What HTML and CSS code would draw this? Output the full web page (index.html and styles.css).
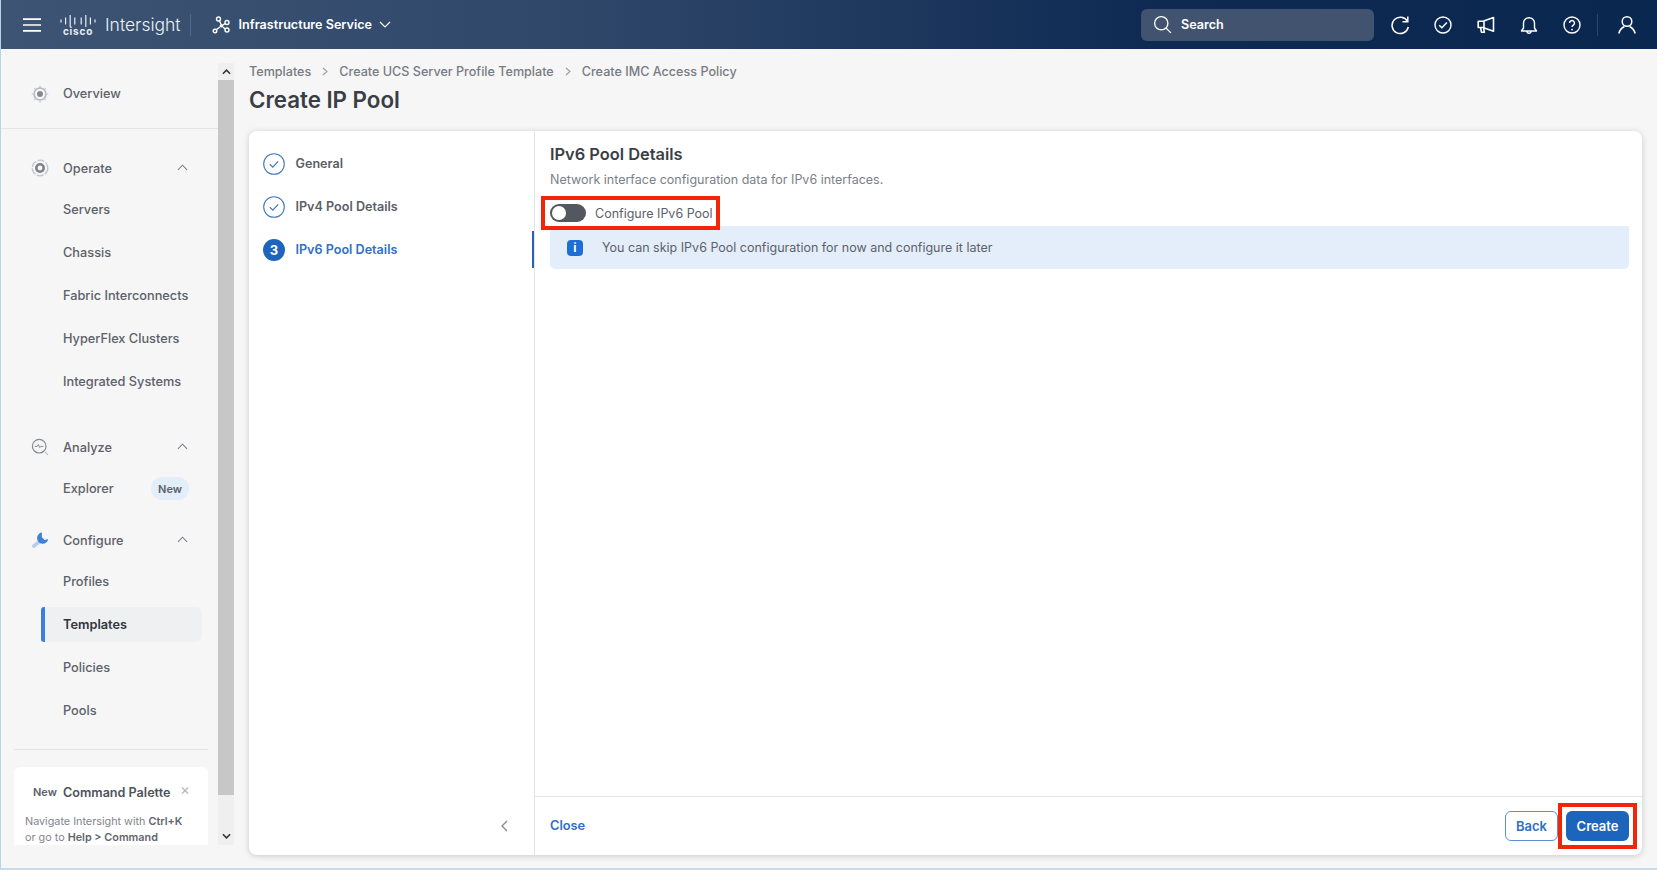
FILE: index.html
```html
<!DOCTYPE html>
<html lang="en">
<head>
<meta charset="utf-8">
<title>Create IP Pool</title>
<link rel="stylesheet" href="styles.css">
</head>
<body>
<div class="page">
  <header class="topbar">
    <svg class="burger" viewBox="0 0 18 14" width="18" height="14"><path d="M0 1.2h18M0 7h18M0 12.8h18" stroke="#fff" stroke-width="1.7" fill="none"/></svg>
    <div class="logo">
      <svg class="logo-bars" viewBox="0 0 36 13" width="36" height="13"><path d="M1 5.5v3M5.6 3.5v7M10.2 1v12M14.8 3.5v7M21.2 3.5v7M25.8 1v12M30.4 3.5v7M35 5.5v3" stroke="#e8edf4" stroke-width="1.2" fill="none"/></svg>
      <span class="logo-word">cisco</span>
    </div>
    <span class="product">Intersight</span>
    <span class="vrule"></span>
    <svg class="service-ico" viewBox="0 0 18 18" width="18" height="18"><g fill="none" stroke="#fff" stroke-width="1.4"><circle cx="6.5" cy="3" r="2"/><circle cx="15" cy="6.5" r="2"/><circle cx="15" cy="14" r="2"/><circle cx="3" cy="15" r="1.8"/><path d="M7.5 5l1.5 3M4.5 13.5L8 11M13 7.5l-2 1.5M13 13l-2-2"/></g><circle cx="9.5" cy="9.8" r="1.8" fill="#fff"/></svg>
    <span class="service">Infrastructure Service</span>
    <svg class="service-chev" viewBox="0 0 12 7" width="12" height="7"><path d="M1 1l5 5 5-5" stroke="#fff" stroke-width="1.2" fill="none"/></svg>
    <div class="search">
      <svg viewBox="0 0 20 20" width="19" height="19"><circle cx="8.7" cy="8.7" r="7" fill="none" stroke="#fff" stroke-width="1.4"/><path d="M13.8 13.8l5 5" stroke="#fff" stroke-width="1.4"/></svg>
      <span>Search</span>
    </div>
    <div class="tools">
      <svg viewBox="0 0 20 20" width="20" height="20"><path d="M17.5 6.5A8.2 8.2 0 1 0 18.3 12" fill="none" stroke="#fff" stroke-width="1.5"/><path d="M17.8 1.5v5.3h-5.3" fill="none" stroke="#fff" stroke-width="1.5"/></svg>
      <svg viewBox="0 0 20 20" width="20" height="20"><circle cx="10" cy="10" r="8" fill="none" stroke="#fff" stroke-width="1.4"/><path d="M6.2 10.2l2.7 2.6 5-5.3" fill="none" stroke="#fff" stroke-width="1.4"/></svg>
      <svg viewBox="0 0 20 20" width="20" height="20"><path d="M17.5 2.5L7 6.3H2.2v6.2H7l10.5 3.8zM8 6v6.6M4.6 12.5l.8 4.7h3l-.8-4.2" fill="none" stroke="#fff" stroke-width="1.6" stroke-linejoin="round"/></svg>
      <svg viewBox="0 0 20 20" width="20" height="20"><path d="M2.5 16h15l-2-3V8.2a5.5 5.5 0 0 0-11 0V13zM8 16.2a2 2 0 0 0 4 0" fill="none" stroke="#fff" stroke-width="1.4" stroke-linejoin="round"/></svg>
      <svg viewBox="0 0 20 20" width="20" height="20"><circle cx="10" cy="10" r="8" fill="none" stroke="#fff" stroke-width="1.4"/><path d="M7.5 8a2.5 2.5 0 1 1 3.8 2.1c-.9.6-1.3 1-1.3 2" fill="none" stroke="#fff" stroke-width="1.4"/><circle cx="10" cy="14.6" r=".9" fill="#fff"/></svg>
      <span class="tool-rule"></span>
      <svg viewBox="0 0 20 20" width="20" height="20"><circle cx="10" cy="6.5" r="4.8" fill="none" stroke="#fff" stroke-width="1.5"/><path d="M1.8 18.5c1-4 4-6.2 5.6-7M18.2 18.5c-1-4-4-6.2-5.6-7" fill="none" stroke="#fff" stroke-width="1.5"/></svg>
    </div>
  </header>

  <div class="workspace">
    <aside class="sidebar">
      <div class="overview-block">
        <div class="nav-head">
          <svg class="nav-ico" viewBox="0 0 18 18" width="18" height="18"><circle cx="9" cy="9" r="6" fill="none" stroke="#b4b8bd" stroke-width="1.6"/><circle cx="9" cy="9" r="3" fill="#85898f"/><path d="M9 .6v2.4M9 15v2.4M.6 9H3M15 9h2.4M3.2 3.2l1.6 1.6M13.2 13.2l1.6 1.6M14.8 3.2l-1.6 1.6M4.8 13.2l-1.6 1.6" stroke="#c2c5c9" stroke-width="1.2"/></svg>
          <span>Overview</span>
        </div>
      </div>
      <div class="nav-group first-group">
        <div class="nav-head">
          <svg class="nav-ico" viewBox="0 0 18 18" width="18" height="18"><circle cx="9" cy="9" r="7.8" fill="none" stroke="#c2c5c9" stroke-width="1.3" stroke-dasharray="7 1.5"/><circle cx="9" cy="9" r="3.7" fill="none" stroke="#7f8389" stroke-width="2.6"/></svg>
          <span>Operate</span>
          <svg class="chev" viewBox="0 0 12 7" width="11" height="7"><path d="M1 6l5-5 5 5" stroke="#777b82" stroke-width="1.1" fill="none"/></svg>
        </div>
        <a class="nav-sub">Servers</a>
        <a class="nav-sub">Chassis</a>
        <a class="nav-sub">Fabric Interconnects</a>
        <a class="nav-sub">HyperFlex Clusters</a>
        <a class="nav-sub">Integrated Systems</a>
      </div>
      <div class="nav-group analyze-group">
        <div class="nav-head">
          <svg class="nav-ico" viewBox="0 0 18 18" width="18" height="18"><circle cx="8.2" cy="8.2" r="6.8" fill="none" stroke="#85898f" stroke-width="1.2"/><path d="M3.8 8.4h2.4l1.2-1.8 1.4 3 1-1.2h2.5" fill="none" stroke="#85898f" stroke-width="1"/><path d="M14 14l3 3" stroke="#c2c5c9" stroke-width="1.3"/></svg>
          <span>Analyze</span>
          <svg class="chev" viewBox="0 0 12 7" width="11" height="7"><path d="M1 6l5-5 5 5" stroke="#777b82" stroke-width="1.1" fill="none"/></svg>
        </div>
        <a class="nav-sub">Explorer<span class="badge">New</span></a>
      </div>
      <div class="nav-group configure-group">
        <div class="nav-head">
          <svg class="nav-ico" viewBox="0 0 18 18" width="18" height="18"><path d="M2.8 15.2L8 11" stroke="#b5cdf0" stroke-width="3.6" stroke-linecap="round" fill="none"/><path d="M11 1.6A5.6 5.6 0 1 0 17.2 8L13.6 9l-2.8-3z" fill="#3f7fdc"/></svg>
          <span>Configure</span>
          <svg class="chev" viewBox="0 0 12 7" width="11" height="7"><path d="M1 6l5-5 5 5" stroke="#777b82" stroke-width="1.1" fill="none"/></svg>
        </div>
        <a class="nav-sub">Profiles</a>
        <a class="nav-sub is-current">Templates</a>
        <a class="nav-sub">Policies</a>
        <a class="nav-sub">Pools</a>
      </div>
      <div class="side-rule"></div>
      <div class="palette">
        <div class="palette-head">
          <span class="palette-new">New</span>
          <span class="palette-title">Command Palette</span>
          <span class="palette-x">×</span>
        </div>
        <p class="palette-text">Navigate Intersight with <b>Ctrl+K</b><br>or go to <b>Help &gt; Command</b></p>
      </div>
    </aside>

    <div class="scrollbar">
      <div class="scroll-btn"><svg viewBox="0 0 10 6" width="9" height="6"><path d="M1 5l4-4 4 4" stroke="#333" stroke-width="1.7" fill="none"/></svg></div>
      <div class="scroll-thumb"></div>
      <div class="scroll-btn end"><svg viewBox="0 0 10 6" width="9" height="6"><path d="M1 1l4 4 4-4" stroke="#333" stroke-width="1.7" fill="none"/></svg></div>
    </div>

    <main class="main">
      <nav class="crumbs">
        <span>Templates</span>
        <svg class="crumb-sep" viewBox="0 0 6 9" width="6" height="9"><path d="M1 1l4 3.5L1 8" stroke="#9a9ea4" stroke-width="1.1" fill="none"/></svg>
        <span>Create UCS Server Profile Template</span>
        <svg class="crumb-sep" viewBox="0 0 6 9" width="6" height="9"><path d="M1 1l4 3.5L1 8" stroke="#9a9ea4" stroke-width="1.1" fill="none"/></svg>
        <span>Create IMC Access Policy</span>
      </nav>
      <h1 class="page-title">Create IP Pool</h1>
      <section class="wizard">
        <div class="steps">
          <div class="step-list">
            <div class="step">
              <svg viewBox="0 0 22 22" width="22" height="22"><circle cx="11" cy="11" r="10.3" fill="none" stroke="#3f76c4" stroke-width="1.1"/><path d="M6.8 11.3l3 2.9 5.4-5.8" fill="none" stroke="#3f76c4" stroke-width="1.2"/></svg>
              <span>General</span>
            </div>
            <div class="step">
              <svg viewBox="0 0 22 22" width="22" height="22"><circle cx="11" cy="11" r="10.3" fill="none" stroke="#3f76c4" stroke-width="1.1"/><path d="M6.8 11.3l3 2.9 5.4-5.8" fill="none" stroke="#3f76c4" stroke-width="1.2"/></svg>
              <span>IPv4 Pool Details</span>
            </div>
            <div class="step active">
              <span class="step-num">3</span>
              <span>IPv6 Pool Details</span>
            </div>
          </div>
          <div class="collapse"><svg viewBox="0 0 8 12" width="8" height="12"><path d="M7 1L2 6l5 5" stroke="#85898f" stroke-width="1.3" fill="none"/></svg></div>
        </div>
        <div class="pane">
          <div class="pane-body">
            <h2 class="pane-title">IPv6 Pool Details</h2>
            <p class="pane-sub">Network interface configuration data for IPv6 interfaces.</p>
            <div class="toggle-row">
              <span class="toggle"><span class="knob"></span></span>
              <span>Configure IPv6 Pool</span>
            </div>
            <div class="notice">
              <span class="notice-ico">i</span>
              <span>You can skip IPv6 Pool configuration for now and configure it later</span>
            </div>
          </div>
          <footer class="pane-foot">
            <a class="close">Close</a>
            <button class="btn btn-back">Back</button>
            <div class="create-box"><button class="btn btn-create">Create</button></div>
          </footer>
        </div>
      </section>
    </main>
  </div>
</div>
</body>
</html>
```
FILE: styles.css
```css
* { box-sizing: border-box; }
html, body { margin: 0; padding: 0; }
body {
  font-family: Inter, "Liberation Sans", sans-serif;
  color: #5c6169;
  background: #f6f6f6;
}
.page {
  width: 1657px;
  height: 870px;
  overflow: hidden;
  display: flex;
  flex-direction: column;
  border-left: 1px solid #b9d3e6;
  border-bottom: 2px solid #c5dcee;
  background: #f6f6f6;
}

/* top bar */
.topbar {
  flex: 0 0 49px;
  margin-left: -1px;
  display: flex;
  align-items: center;
  color: #fff;
  background: linear-gradient(90deg, #3d5474 0%, #2f4769 35%, #0e2a53 70%, #0a2750 100%);
}
.burger { margin-left: 23px; }
.logo {
  margin-left: 19px;
  width: 36px;
  display: flex;
  flex-direction: column;
  align-items: center;
}
.logo-bars { display: block; margin-top: 1px; }
.logo-word {
  font-size: 10px;
  line-height: 9px;
  font-weight: 700;
  letter-spacing: .8px;
  color: #e8edf4;
}
.product {
  margin-left: 9px;
  font-size: 17.5px;
  font-weight: 300;
  color: #eef1f6;
}
.vrule {
  width: 1px;
  height: 22px;
  margin-left: 9px;
  background: #53688a;
}
.service-ico { margin-left: 21px; }
.service {
  margin-left: 9px;
  font-size: 12.6px;
  font-weight: 600;
}
.service-chev { margin-left: 7px; }
.search {
  margin-left: auto;
  width: 233px;
  height: 32px;
  display: flex;
  align-items: center;
  gap: 9px;
  padding-left: 12px;
  border-radius: 6px;
  background: #42536f;
  font-size: 12.6px;
  font-weight: 600;
}
.tools {
  display: flex;
  align-items: center;
  margin-left: 16px;
  margin-right: 20px;
  gap: 23px;
}
.tool-rule {
  width: 1px;
  height: 22px;
  margin: 0 -4px 0 -8px;
  background: #2b456d;
}

/* layout */
.workspace {
  flex: 1;
  display: flex;
  min-height: 0;
}
.sidebar {
  width: 217px;
  height: 796px;
  flex: none;
  overflow: hidden;
  font-size: 12.75px;
  font-weight: 500;
}
.overview-block {
  padding: 24px 0 14px;
  border-bottom: 1px solid #e2e4e7;
}
.nav-head {
  height: 40px;
  display: flex;
  align-items: center;
  padding-left: 30px;
  position: relative;
}
.nav-ico { flex: none; margin-right: 14px; }
.chev { position: absolute; left: 176px; top: 16px; }
.nav-group { display: flex; flex-direction: column; }
.first-group { margin-top: 19px; }
.analyze-group { margin-top: 24px; }
.configure-group { margin-top: 10px; }
.overview-block .nav-head { height: 41px; }
.nav-sub {
  height: 35px;
  margin: 4px 16px 4px 40px;
  padding-left: 22px;
  display: flex;
  align-items: center;
  position: relative;
  border-radius: 0 6px 6px 0;
}
.badge {
  position: absolute;
  left: 110px;
  top: 6px;
  width: 38px;
  height: 23px;
  border-radius: 12px;
  background: #e3eefb;
  color: #5c6169;
  font-size: 11px;
  font-weight: 600;
  display: flex;
  align-items: center;
  justify-content: center;
}
.is-current {
  background: #eff0f2;
  border-left: 4px solid #3f7fdc;
  border-radius: 3px 6px 6px 3px;
  padding-left: 18px;
  color: #30353c;
  font-weight: 600;
}
.side-rule {
  height: 1px;
  margin: 17px 10px 17px 13px;
  background: #e0e2e5;
}
.palette {
  margin: 0 10px 0 13px;
  height: 90px;
  padding: 15px 11px;
  background: #fff;
  border-radius: 6px;
}
.palette-head {
  display: flex;
  align-items: center;
  position: relative;
  height: 20px;
}
.palette-new {
  margin-left: 8px;
  width: 30px;
  font-size: 11px;
  font-weight: 600;
}
.palette-title {
  font-size: 12.6px;
  font-weight: 600;
  color: #4e535b;
}
.palette-x {
  position: absolute;
  left: 155px;
  top: -2px;
  color: #b4b8bd;
  font-size: 15px;
  font-weight: 400;
}
.palette-text {
  margin: 12px 0 0;
  font-size: 10.8px;
  line-height: 16px;
  font-weight: 400;
  color: #82868d;
}
.palette-text b { font-weight: 600; color: #62666e; }

/* scrollbar */
.scrollbar {
  width: 16px;
  flex: none;
  height: 782px;
  margin-top: 14px;
  display: flex;
  flex-direction: column;
  background: #efefef;
}
.scroll-btn {
  height: 17px;
  flex: none;
  display: flex;
  align-items: center;
  justify-content: center;
}
.scroll-btn.end { height: 33px; align-items: flex-end; padding-bottom: 6px; margin-top: auto; }
.scroll-thumb { height: 715px; background: #c7c7c7; }

/* main */
.main {
  flex: 1;
  min-width: 0;
  padding: 14px 15px 13px 15px;
  display: flex;
  flex-direction: column;
}
.crumbs {
  height: 16px;
  display: flex;
  align-items: center;
  font-size: 12.6px;
  font-weight: 500;
  color: #777b82;
}
.crumb-sep {
  margin: 1px 11px 0 11px;
  flex: none;
}
.page-title {
  margin: 3px 0 0;
  height: 36px;
  font-size: 22.3px;
  line-height: 36px;
  font-weight: 600;
  color: #3a3e45;
}
.wizard {
  margin-top: 13px;
  flex: 1;
  min-height: 0;
  display: flex;
  background: #fff;
  border-radius: 8px;
  overflow: hidden;
  box-shadow: 0 1px 6px rgba(0, 0, 0, .18);
}
.steps {
  width: 286px;
  flex: none;
  border-right: 1px solid #e3e4e6;
  display: flex;
  flex-direction: column;
  justify-content: space-between;
}
.step-list { padding-top: 11px; }
.step {
  height: 43px;
  padding-left: 14px;
  display: flex;
  align-items: center;
  gap: 10.5px;
  font-size: 12.6px;
  font-weight: 600;
  color: #5a5e66;
  position: relative;
}
.step.active { color: #2f6fc4; }
.step.active::after {
  content: "";
  position: absolute;
  right: 0;
  top: 3px;
  bottom: 3px;
  width: 2px;
  background: #2c62b4;
}
.step-num {
  width: 22px;
  height: 22px;
  border-radius: 50%;
  background: #1d64bd;
  color: #fff;
  font-size: 13px;
  font-weight: 700;
  display: flex;
  align-items: center;
  justify-content: center;
}
.collapse {
  height: 59px;
  padding: 20px 0 0 251px;
}
.pane {
  flex: 1;
  min-width: 0;
  display: flex;
  flex-direction: column;
}
.pane-body {
  flex: 1;
  padding: 11px 13px 0 15px;
}
.pane-title {
  margin: 0;
  font-size: 16.4px;
  line-height: 24px;
  font-weight: 600;
  color: #3a3e45;
}
.pane-sub {
  margin: 6px 0 0;
  font-size: 12.5px;
  line-height: 16px;
  font-weight: 400;
  color: #7b8088;
}
.toggle-row {
  display: inline-flex;
  align-items: center;
  gap: 9px;
  position: relative;
  z-index: 1;
  margin: 8px 0 0 -9px;
  height: 34px;
  width: 179px;
  padding-left: 5px;
  border: 4px solid #f2250a;
  background: #fff;
  font-size: 12.5px;
  font-weight: 400;
  white-space: nowrap;
  color: #5c6169;
  vertical-align: top;
}
.toggle {
  width: 36px;
  height: 18px;
  border-radius: 9px;
  background: #53575f;
  padding: 2px;
  flex: none;
}
.knob {
  display: block;
  width: 14px;
  height: 14px;
  border-radius: 50%;
  background: #fff;
}
.notice {
  height: 43px;
  margin-top: -4px;
  display: flex;
  align-items: center;
  padding-left: 17px;
  gap: 19px;
  background: #e4eefb;
  border-radius: 0 0 5px 5px;
  font-size: 12.5px;
  font-weight: 400;
  color: #5c6169;
}
.notice-ico {
  width: 16px;
  height: 16px;
  border-radius: 4px;
  background: #1d6fd6;
  color: #fff;
  font-size: 12px;
  font-weight: 700;
  display: flex;
  align-items: center;
  justify-content: center;
}
.pane-foot {
  height: 59px;
  flex: none;
  border-top: 1px solid #e3e4e6;
  padding: 14px 13px 0 15px;
  display: flex;
  align-items: flex-start;
}
.close {
  margin-right: auto;
  font-size: 12.8px;
  line-height: 30px;
  font-weight: 600;
  color: #2f6fc4;
}
.btn {
  height: 30px;
  border-radius: 6px;
  font-family: inherit;
  font-size: 13px;
  font-weight: 600;
  padding: 0;
  display: block;
}
.btn-back {
  width: 53px;
  background: #fff;
  border: 1px solid #5b8fd3;
  color: #2f6fc4;
}
.create-box {
  margin: -8px -8px -8px 0;
  padding: 4px;
  border: 4px solid #f2250a;
}
.btn-create {
  width: 63px;
  background: #1d64bd;
  border: 0;
  color: #fff;
}
```
